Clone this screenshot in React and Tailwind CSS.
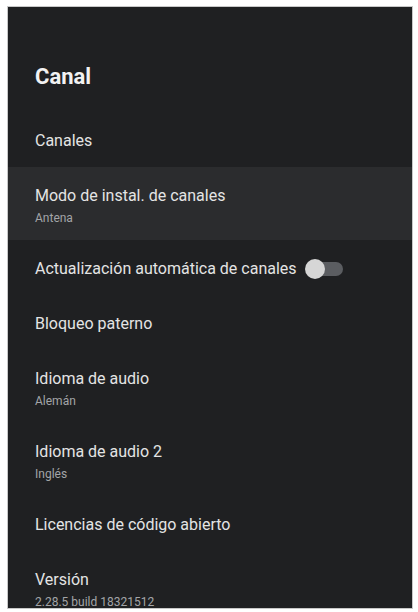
import React from 'react';

const rows = [
  { title: 'Canales' },
  { title: 'Modo de instal. de canales', sub: 'Antena', focused: true },
  { title: 'Actualización automática de canales', toggle: true },
  { title: 'Bloqueo paterno' },
  { title: 'Idioma de audio', sub: 'Alemán' },
  { title: 'Idioma de audio 2', sub: 'Inglés' },
  { title: 'Licencias de código abierto' },
  { title: 'Versión', sub: '2.28.5 build 18321512' },
];

const Toggle = () => (
  <div className="relative ml-[8px] h-[20px] w-[38px] shrink-0">
    <div className="absolute left-[10px] right-0 top-[3px] h-[14px] rounded-full bg-[#5b5d61]" />
    <div className="absolute left-0 top-0 h-[20px] w-[20px] rounded-full bg-[#d6d6d6]" />
  </div>
);

const Row = ({ row }) => {
  if (row.sub) {
    return (
      <div className={`h-[73px] shrink-0 px-[27px] pt-[19px] ${row.focused ? 'bg-[#2b2c2e]' : ''}`}>
        <div className="text-[16px] leading-[20px] text-[#e4e4e4]">{row.title}</div>
        <div className="mt-[5px] text-[12px] leading-[14px] text-[#a3a5a8]">{row.sub}</div>
      </div>
    );
  }
  return (
    <div className="flex h-[55px] shrink-0 items-center px-[27px] pt-[3px]">
      <span className="text-[16px] leading-[20px] text-[#e4e4e4]">{row.title}</span>
      {row.toggle && <Toggle />}
    </div>
  );
};

export default function App() {
  return (
    <div className="h-[612px] w-[418px] overflow-hidden bg-white pb-[3px] pl-[7px] pr-[5px] pt-[6px]" style={{ fontFamily: 'Roboto, "Noto Sans", sans-serif' }}>
      <div className="flex h-full flex-col overflow-hidden border border-[#c8c8c8] bg-[#1f2022]">
        <div className="px-[27px] pt-[56px] pb-[21px] text-[22px] font-bold leading-[28px] text-[#f2f2f2]">Canal</div>
        {rows.map((row) => (
          <Row key={row.title} row={row} />
        ))}
      </div>
    </div>
  );
}
